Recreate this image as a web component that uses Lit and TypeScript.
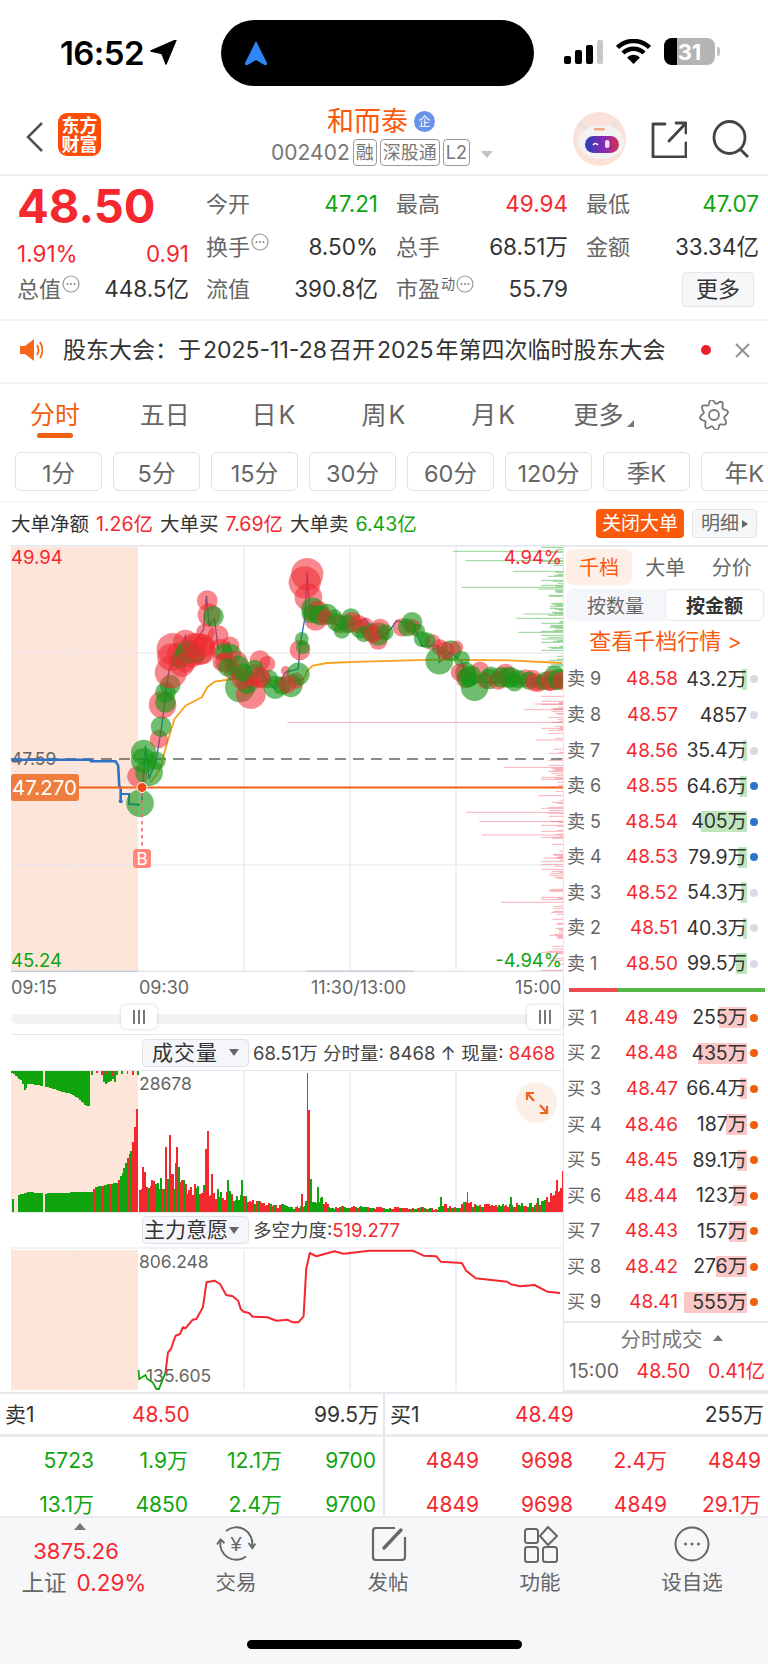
import { LitElement, html, css, svg, unsafeCSS } from "lit";
import { customElement } from "lit/decorators.js";

const RED = "#f5282f";
const GREEN = "#10a50e";
const R = unsafeCSS(RED);
const G = unsafeCSS(GREEN);
const zx = (x: number) => x / 2.75;
const zy = (y: number, o = 540) => o + y / 3;
let seed = 7;
const rnd = () => {
  seed = (seed * 16807) % 2147483647;
  return (seed - 1) / 2147483646;
};
const pts = (a: number[][], o = 540) => a.map(([x, y]) => `${zx(x).toFixed(1)},${zy(y, o).toFixed(1)}`).join(" ");
const interp = (t: number[][], x: number) => {
  for (let i = 1; i < t.length; i++) {
    if (x <= t[i][0]) {
      const [a, b] = t[i - 1];
      const [c, d] = t[i];
      return b + ((d - b) * (x - a)) / (c - a || 1);
    }
  }
  return t[t.length - 1][1];
};

// [zoomX, zoomY, radius, 1 = green]
const BUBBLES: number[][] = [
  [378,712,9,0],[385,793,12,1],[395,640,11,1],[395,665,11,1],[410,700,12,1],[430,665,8,1],[437,600,8,0],[443,563,9,1],
  [447,497,12,0],[455,490,9,1],[455,460,9,1],[468,438,9,1],[470,400,14,0],[470,355,12,0],[475,330,14,0],[510,310,11,0],
  [500,375,11,0],[495,360,8,1],[525,345,12,0],[545,330,14,0],[540,345,8,1],[560,320,10,0],[565,280,8,0],[570,185,9,0],
  [575,228,10,0],[587,232,9,1],[600,290,9,0],[605,330,9,0],[633,320,8,0],[615,340,8,1],[635,345,9,1],[610,370,8,0],
  [650,370,10,0],[655,385,10,1],[640,395,8,0],[660,445,13,1],[690,465,13,0],[680,430,10,1],[715,365,9,0],[700,410,10,0],
  [735,375,7,0],[720,420,8,0],[740,420,8,1],[757,445,10,1],[785,395,4,0],[800,440,10,1],[815,425,7,0],[820,405,10,1],
  [825,333,9,0],[833,325,6,1],[830,300,6,1],[845,105,14,0],[838,130,14,0],[848,175,12,0],[868,240,10,0],[860,210,10,1],
  [875,220,10,0],[900,225,9,1],[920,235,7,1],[935,255,8,0],[940,275,7,1],[965,235,8,1],[968,250,9,0],[990,270,8,1],
  [1005,260,7,0],[1020,280,8,1],[1040,305,8,0],[1040,285,10,1],[1045,270,9,0],[1105,265,8,0],[1133,250,9,1],[1135,265,7,0],
  [1160,300,7,1],[1190,310,7,0],[1210,325,7,0],[1208,365,12,1],[1240,335,9,1],[1255,325,6,0],[1270,360,7,1],[1280,400,9,1],
  [1280,420,8,0],[1305,445,12,1],[1320,395,8,0],[1290,420,7,1],[1350,410,8,1],[1335,425,7,0],[1395,415,9,1],[1390,405,9,0],
  [1415,430,8,1],[1445,418,8,0],[1465,420,8,0],[1490,430,7,1],[1480,435,7,0],[1525,410,9,1],[1525,430,6,0],[1530,430,7,1],[1510,435,6,0],
  // packed cluster stretches
  [880,228,9,1],[855,225,8,1],[895,235,7,0],[925,250,8,1],[955,255,8,1],[985,255,8,0],[1000,285,7,1],[1025,285,8,0],[1060,280,7,1],
  [1120,265,8,1],[1150,275,6,1],[1175,305,7,1],[1225,335,8,0],[1265,400,8,0],[1295,410,9,1],[1285,415,9,1],
  [1345,420,9,1],[1370,425,8,0],[1378,415,9,1],[1405,415,9,1],[1425,420,8,1],[1455,425,8,1],[1470,430,8,0],[1500,425,8,1],
  [1515,425,9,0],[1535,420,9,1],[1545,425,8,0],[490,345,10,0],[515,340,10,1],[510,370,9,0],[535,320,11,0],[555,335,12,0],
  [620,370,9,0],[625,385,8,1],[665,420,9,0],[670,400,8,1],[700,390,8,1],[715,415,9,0],[775,440,8,1],[790,435,8,0],
];
const PRICE = [[390,790],[400,620],[410,720],[430,660],[445,560],[455,470],[465,390],[480,370],[510,290],[520,340],[560,270],[568,170],[575,260],[590,240],[600,330],[630,310],[640,400],[690,450],[715,380],[730,420],[757,450],[785,400],[820,390],[825,320],[838,240],[845,100],[850,200],[900,230],[940,270],[1005,240],[1040,300],[1075,270],[1090,245],[1135,255],[1160,320],[1205,320],[1208,370],[1240,340],[1270,370],[1285,430],[1400,430],[1545,430]];
const AVG = [[415,730],[440,690],[460,610],[480,540],[510,500],[555,475],[570,445],[590,428],[640,420],[800,430],[835,420],[845,395],[860,380],[900,372],[1000,368],[1200,362],[1400,364],[1545,372]];
const WILL_RED = [[455,490],[462,430],[470,420],[483,380],[495,375],[503,355],[510,358],[530,332],[540,330],[558,295],[568,220],[590,215],[605,225],[622,258],[640,262],[655,275],[662,300],[670,308],[685,312],[695,323],[735,325],[760,335],[790,332],[805,340],[820,340],[835,322],[842,180],[852,132],[870,142],[920,127],[945,134],[1015,125],[1135,125],[1165,140],[1200,142],[1212,158],[1270,162],[1282,185],[1308,208],[1395,218],[1405,226],[1430,232],[1470,228],[1505,248],[1540,252]];
const WILL_GREEN = [[381,483],[383,510],[400,498],[405,510],[420,520],[430,540],[437,540],[450,505],[455,490]];

const DEPTH: { y: number; x: number; g: boolean }[] = [];
for (let y = 25; y < 1295; y += 3) {
  const g = y < 400;
  const p = rnd();
  if (p < (g ? 0.5 : 0.45)) DEPTH.push({ y, g, x: 1548 - (p < 0.06 ? 60 : 8 + rnd() * 35) });
}
([[1245,37],[1280,65],[1410,97],[1270,145],[1480,150],[1420,238],[1425,280],[1490,300],[1440,225]] as number[][]).forEach(([x, y]) => DEPTH.push({ x, y, g: true }));
([[790,550],[1440,512],[1475,603],[1385,685],[1282,820],[1318,848],[1325,888],[1495,957],[1378,1090],[1520,1230],[1470,495],[1480,770]] as number[][]).forEach(([x, y]) => DEPTH.push({ x, y, g: false }));

// volume bars, in zoom units (origin y = 1020, base = 578)
const VOL: { x: number; h: number; c: string; top?: boolean }[] = [];
const TOP_ENV = [[30,5],[58,30],[66,58],[76,38],[100,42],[120,46],[150,55],[170,64],[190,66],[210,80],[230,100],[245,108]];
for (let x = 31; x < 246; x += 4.9) if (Math.abs(x - 118) > 3) VOL.push({ x, h: interp(TOP_ENV, x), c: GREEN, top: true });
for (let x = 283; x < 315; x += 4.9) VOL.push({ x, h: 22 + rnd() * 16, c: GREEN, top: true });
for (let x = 250; x < 378; x += 14) VOL.push({ x, h: 6 + rnd() * 8, c: rnd() > 0.5 ? RED : GREEN, top: true });
const PRE_ENV = [[50,52],[80,60],[120,55],[170,58],[250,60],[260,75],[320,88],[335,120],[350,165],[360,185],[367,235],[373,310]];
for (let x = 50; x < 378; x += 4.9) if (Math.abs(x - 118) > 3) VOL.push({ x, h: interp(PRE_ENV, x), c: (x > 250 && Math.floor(x) % 23 < 5) || x > 360 ? RED : GREEN });
VOL.push({ x: 34, h: 38, c: GREEN });
const ENV = [[381,100],[400,90],[440,110],[480,130],[530,85],[600,75],[660,60],[700,35],[820,18],[840,40],[880,50],[910,20],[1200,14],[1215,25],[1260,18],[1285,45],[1300,25],[1400,25],[1480,30],[1510,60],[1545,80]];
for (let x = 382; x < 1546; x += 4.87) VOL.push({ x, h: interp(ENV, x) * (0.5 + 0.5 * rnd()), c: rnd() > 0.45 ? RED : GREEN });
([[390,135,RED],[396,120,RED],[455,195,RED],[465,230,RED],[485,195,RED],[480,148,RED],[460,100,GREEN],[490,135,GREEN],[503,95,GREEN],[570,242,RED],[565,190,RED],[580,115,RED],[625,95,GREEN],[662,95,GREEN],[843,418,RED],[848,306,RED],[828,55,RED],[853,98,GREEN],[872,75,GREEN],[1210,45,GREEN],[1283,60,GREEN],[1403,45,GREEN],[1478,42,GREEN],[1545,122,RED],[1530,95,RED]] as [number, number, string][]).forEach(([x, h, c]) => VOL.push({ x, h, c }));

const ASKS = [["9","48.58","43.2万",5,0],["8","48.57","4857",0,0],["7","48.56","35.4万",4,0],["6","48.55","64.6万",7,1],["5","48.54","405万",46,1],["4","48.53","79.9万",9,1],["3","48.52","54.3万",6,0],["2","48.51","40.3万",4,0],["1","48.50","99.5万",11,0]] as [string,string,string,number,number][];
const BIDS = [["1","48.49","255万",28],["2","48.48","435万",49],["3","48.47","66.4万",7],["4","48.46","187万",21],["5","48.45","89.1万",10],["6","48.44","123万",14],["7","48.43","157万",18],["8","48.42","276万",31],["9","48.41","555万",63]] as [string,string,string,number][];

const gearPath = (() => {
  const p: string[] = [];
  for (let i = 0; i <= 96; i++) {
    const a = (i / 96) * Math.PI * 2;
    const r = 12.3 + 1.9 * Math.cos(a * 8 + Math.PI / 2);
    p.push(`${(15 + r * Math.cos(a)).toFixed(2)} ${(15 + r * Math.sin(a) * 1.1).toFixed(2)}`);
  }
  return "M" + p.join("L") + "Z";
})();

const dots = html`<svg class="info" width="18" height="18" viewBox="0 0 18 18"><circle cx="9" cy="9" r="8" fill="none" stroke="#999" stroke-width="1.2"/><circle cx="5.5" cy="9" r="1" fill="#888"/><circle cx="9" cy="9" r="1" fill="#888"/><circle cx="12.5" cy="9" r="1" fill="#888"/></svg>`;
const T = "Inter, sans-serif";

@customElement("app-root")
export class AppRoot extends LitElement {
  static styles = css`
    :host { display: block; width: 768px; height: 1665px; overflow: hidden; background: #fff; position: relative; font-family: Inter, "Noto Sans CJK SC", sans-serif; color: #333; }
    svg { display: block; }
    .status { height: 100px; display: flex; align-items: flex-start; position: relative; }
    .time { font-size: 33px; font-weight: 600; color: #000; margin: 33px 0 0 60px; width: 90px; letter-spacing: -0.6px; line-height: 40px; }
    .loc { margin: 40px 0 0 0; }
    .island { position: absolute; left: 221px; top: 20px; width: 313px; height: 66px; border-radius: 33px; background: #000; display: flex; align-items: center; padding-left: 23px; box-sizing: border-box; }
    .sysicons { position: absolute; left: 564px; top: 38px; display: flex; align-items: center; gap: 13px; }
    .batt { width: 51px; height: 27px; border-radius: 8px; background: #b4b4b4; position: relative; display: flex; align-items: center; justify-content: center; overflow: hidden; color: #fff; font: 700 22px Inter, sans-serif; }
    .batt i { position: absolute; left: 0; top: 0; bottom: 0; width: 13px; background: #000; }
    .batt span { position: relative; }
    .tip { width: 3px; height: 9px; border-radius: 0 2px 2px 0; background: #c4c4c4; margin-left: -11px; }
    .head { border-bottom: 2px solid #eceef1; display: flex; align-items: center; position: relative; height: 74px; }
    .back { margin-left: 25px; }
    .logo { width: 43px; height: 43px; border-radius: 9px; background: #fa4d0a; color: #fff; margin-left: 13px; margin-top: -6px; display: flex; flex-direction: column; align-items: center; justify-content: center; font: 700 18px/20px "Noto Sans CJK SC", sans-serif; }
    .logo span { display: block; height: 19px; line-height: 19px; }
    .title { position: absolute; left: 200px; right: 200px; top: 5px; display: flex; flex-direction: column; align-items: center; }
    .name { color: #fa5a0c; font-size: 27px; line-height: 34px; display: flex; align-items: center; gap: 6px; transform: translateX(-3px); }
    .qy { width: 21px; height: 21px; border-radius: 50%; background: #6a92ea; color: #fff; font-size: 12px; line-height: 21px; display: flex; align-items: center; justify-content: center; margin-top: -2px; }
    .codes { display: flex; align-items: center; gap: 3px; color: #777; font-size: 21px; line-height: 27px; height: 27px; transform: translateX(-2px); }
    .codes b { font-weight: 400; font-size: 18px; line-height: 25px; height: 25px; border: 1px solid #9a9a9a; border-radius: 4px; padding: 0 2px; color: #777; }
    .codes em { width: 0; height: 0; border: 6px solid transparent; border-top: 7px solid #c4c4c4; border-bottom: 0; margin: 3px 0 0 8px; }
    .headr { margin-left: auto; display: flex; align-items: center; margin-right: 18px; margin-top: 4px; }
    .quote { height: 143px; border-bottom: 2px solid #f1f2f4; display: flex; }
    .qleft { width: 172px; margin-left: 17px; display: flex; flex-direction: column; }
    .price { color: ${R}; font-size: 47px; font-weight: 700; line-height: 60px; height: 58px; }
    .sub { display: flex; justify-content: space-between; color: ${R}; font-size: 22.5px; line-height: 26px; height: 39px; align-items: center; }
    .lastl { display: flex; justify-content: space-between; align-items: center; height: 31px; font-size: 22.5px; line-height: 26px; color: #333; white-space: nowrap; }
    .lab { color: #666; font-size: 22px; line-height: 26px; display: inline-flex; align-items: center; }
    .info { margin: -10px 0 0 1px; }
    .stats { margin: 7px 0 0 17px; display: grid; grid-template-columns: 172px 172px 173px; column-gap: 18px; grid-auto-rows: 42.5px; align-items: center; }
    .stat { display: flex; justify-content: space-between; align-items: center; font-size: 22.5px; line-height: 26px; color: #333; white-space: nowrap; }
    .r { color: ${R}; } .g { color: ${G}; }
    .more { width: 72px; height: 35px; box-sizing: border-box; border: 1px solid #e4e6ea; border-radius: 4px; background: #f6f7f9; color: #333; font-size: 22px; display: flex; align-items: center; justify-content: center; margin-left: auto; margin-right: 5px; }
    .notice { height: 58px; padding-bottom: 3px; display: flex; align-items: center; border-bottom: 2px solid #f3f4f6; font-size: 23px; line-height: 28px; }
    .notice .txt { margin-left: 20px; width: 622px; white-space: nowrap; color: #333; }
    .notice .txt span { margin: 0 2px; }
    .rdot { width: 10px; height: 10px; border-radius: 50%; background: #f0202a; margin-left: 16px; }
    .tabs { height: 68px; display: grid; grid-template-columns: repeat(7, 109.8px); align-items: center; color: #666; font-size: 25px; line-height: 30px; position: relative; }
    .tabs > div { text-align: center; margin-bottom: 6px; display: flex; justify-content: center; }
    .on { color: #f0600f; position: relative; }
    .on::after { content: ""; position: absolute; left: 50%; margin-left: -18px; bottom: -8px; width: 36px; height: 5px; border-radius: 3px; background: #f0600f; }
    .tri { width: 0; height: 0; border-left: 7px solid transparent; border-bottom: 7px solid #777; align-self: flex-end; margin: 0 0 3px 4px; }
    .periods { height: 50px; display: flex; gap: 11px; padding-left: 15px; border-bottom: 1px solid #f1f2f4; white-space: nowrap; box-sizing: border-box; }
    .periods div { flex: none; width: 87px; height: 39px; box-sizing: border-box; border: 1px solid #dfe1e5; border-radius: 6px; color: #666; font-size: 23.5px; display: flex; align-items: center; justify-content: center; }
    .big { height: 43px; box-sizing: border-box; display: flex; align-items: center; padding: 0 11px; font-size: 19.5px; line-height: 24px; color: #333; white-space: nowrap; }
    .big span { margin-right: 7px; }
    .close { margin-left: auto; width: 88px; height: 29px; border-radius: 4px; background: #fa5a0c; color: #fff; display: flex; align-items: center; justify-content: center; font-size: 19px; }
    .detail { margin-left: 8px; width: 65px; height: 29px; border-radius: 4px; border: 1px solid #e2e4e8; box-sizing: border-box; background: #f6f7f9; color: #666; display: flex; align-items: center; justify-content: center; gap: 3px; font-size: 19px; }
    .detail i { width: 0; height: 0; border: 4px solid transparent; border-left: 6px solid #666; border-right: 0; }
    .main { display: flex; height: 847px; }
    .left { width: 563px; flex: none; }
    .right { flex: 1; border-left: 1px solid #e4e7ee; border-top: 2px solid #e9ebf0; border-bottom: 2px solid #e4e7ee; box-sizing: border-box; padding: 2px 4px 0 2px; display: flex; flex-direction: column; }
    .leftchart { margin-left: 11px; }
    .times { height: 31px; margin-left: 11px; display: flex; align-items: center; color: #666; font-size: 18px; line-height: 22px; }
    .times span:nth-child(1) { width: 128px; }
    .times span:nth-child(2) { width: 172px; }
    .times span:nth-child(3) { width: 204px; }
    .slider { height: 32px; margin-left: 11px; border-bottom: 1px solid #e4e7ee; box-sizing: border-box; position: relative; display: flex; align-items: center; }
    .track { width: 100%; height: 10px; background: #f1f2f4; border-radius: 5px; }
    .handle { position: absolute; top: 2px; width: 36px; height: 24px; background: #fff; border-radius: 5px; box-shadow: 0 0 3px rgba(0,0,0,.2); display: flex; align-items: center; justify-content: center; gap: 3.5px; }
    .handle i { width: 1.5px; height: 14px; background: #777; }
    .tool { height: 35px; display: flex; align-items: center; margin-left: 142px; font-size: 18.5px; line-height: 24px; color: #444; white-space: nowrap; box-sizing: border-box; }
    .drop { width: 107px; height: 28px; flex: none; box-sizing: border-box; background: #f5f6f9; border: 1px solid #dfe2e8; border-radius: 4px; display: flex; align-items: center; font-size: 21px; line-height: 26px; color: #333; padding-left: 9px; margin-right: 4px; justify-content: space-between; padding-right: 9px; }
    .drop.tight { padding-left: 1px; }
    .drop i { width: 0; height: 0; border: 5px solid transparent; border-top: 7px solid #666; border-bottom: 0; }
    .chartbox { margin-left: 11px; position: relative; }
    .expand { position: absolute; left: 505px; top: 12px; width: 41px; height: 41px; border-radius: 50%; background: #fcefe8; display: flex; align-items: center; justify-content: center; }
    .seg1 { display: flex; height: 36px; font-size: 20px; color: #666; }
    .seg1 div { flex: 1; display: flex; align-items: center; justify-content: center; border-radius: 7px; }
    .seg1 .act { flex: none; width: 66px; background: #fdeee6; color: #fa5a0c; }
    .seg2 { display: flex; height: 32px; margin-top: 4px; background: #f5f6f9; border-radius: 7px; font-size: 19px; color: #666; }
    .seg2 div { width: 99px; display: flex; align-items: center; justify-content: center; }
    .seg2 .act { background: #fff; border: 1px solid #e8eaee; border-radius: 7px; box-sizing: border-box; color: #333; font-weight: 700; }
    .golink { height: 36px; margin-bottom: 5px; display: flex; align-items: center; justify-content: center; color: #fa5a0c; font-size: 22px; white-space: nowrap; }
    .row { height: 35.67px; display: flex; align-items: center; white-space: nowrap; font-size: 19px; line-height: 24px; }
    .row .l { width: 32px; padding-left: 1px; box-sizing: border-box; color: #666; font-size: 18px; flex: none; }
    .row .p { width: 80px; text-align: right; color: ${R}; flex: none; }
    .row .a { width: 69px; text-align: right; position: relative; flex: none; height: 21px; line-height: 21px; color: #333; font-size: 19.5px; letter-spacing: -0.1px; }
    .row .a i { position: absolute; right: 0; top: 0; bottom: 0; }
    .row .a span { position: relative; }
    .dot { width: 8px; height: 8px; border-radius: 50%; margin-left: 3px; flex: none; }
    .power { height: 4px; margin: 6.5px 0 8px 3px; background: linear-gradient(to right, #ee4b4f 0 25%, #53b846 25% 100%); width: 196px; }
    .deal { height: 29px; border-top: 2px solid #e4e7ee; display: flex; align-items: center; justify-content: center; color: #777; font-size: 20.5px; margin: 1px -4px 0 -2px; gap: 10px; padding-left: 10px; }
    .deal i { width: 0; height: 0; border: 5px solid transparent; border-bottom: 6px solid #777; border-top: 0; }
    .trade { display: flex; height: 38px; align-items: center; font-size: 19.5px; line-height: 24px; white-space: nowrap; justify-content: space-between; padding-left: 3px; }
    .table { height: 124px; overflow: hidden; position: relative; border-top: 2px solid #e4e7ee; box-sizing: border-box; }
    .tgrid { display: grid; grid-template-columns: 383px 385px; }
    .cellrow { height: 39px; padding-top: 1px; border-bottom: 3px solid #e9ebef; display: flex; align-items: center; font-size: 21px; line-height: 26px; position: relative; white-space: nowrap; }
    .cellrow .n { width: 127px; padding-left: 5px; color: #333; }
    .cellrow .v { width: 60px; color: ${R}; }
    .cellrow .q { margin-left: auto; margin-right: 4px; }
    .col2 { border-left: 2px solid #e4e7ee; }
    .col2 .n { width: 125px; }
    .trs { display: grid; grid-template-columns: repeat(4, 94px); grid-auto-rows: 44px; align-items: center; text-align: right; font-size: 21px; line-height: 26px; height: 90px; padding-top: 2px; }
    .trs.gg { color: ${G}; padding-right: 7px; }
    .trs.rr { color: ${R}; }
    .nav { height: 148px; background: #f6f7f9; border-top: 2px solid #e9ebef; box-sizing: border-box; display: grid; grid-template-columns: repeat(5, 152px); padding-left: 8px; position: relative; }
    .cell { display: flex; flex-direction: column; align-items: center; color: #666; font-size: 20.5px; padding-top: 6px; }
    .cell svg { height: 40px; }
    .cell span { margin-top: 6px; line-height: 26px; }
    .idx { display: flex; flex-direction: column; align-items: center; font-size: 20px; color: ${R}; margin-left: -8px; }
    .idx em { width: 0; height: 0; border: 6px solid transparent; border-bottom: 7px solid #777; border-top: 0; margin: 5px 0 8px; }
    .idx b { font-weight: 400; line-height: 26px; font-size: 22px; margin-left: -8px; }
    .idx div { line-height: 26px; margin-top: 6px; white-space: nowrap; font-size: 22.5px; margin-left: 8px; }
    .idx u { text-decoration: none; color: #666; margin-right: 10px; }
    .home { position: absolute; left: 247px; top: 122px; width: 275px; height: 9px; border-radius: 5px; background: #000; }
  `;

  mainChart() {
    return html`<svg class="leftchart" width="552" height="427" viewBox="11 546 552 427">
      <rect x="11" y="548" width="127" height="423" fill="#fde5da"/>
      <g stroke="#e3e6ee" stroke-width="1.2">
        <line x1="11" y1="546.5" x2="563" y2="546.5" stroke-width="2"/>
        <line x1="75" y1="548" x2="75" y2="971"/><line x1="244" y1="548" x2="244" y2="971"/><line x1="350" y1="548" x2="350" y2="971"/><line x1="456" y1="548" x2="456" y2="971"/>
        <line x1="11" y1="654" x2="563" y2="654"/><line x1="11" y1="866" x2="563" y2="866"/>
        <line x1="11" y1="972.5" x2="563" y2="972.5" stroke-width="2"/>
      </g>
      <line x1="11" y1="972.5" x2="138" y2="972.5" stroke="#c9cdd8" stroke-width="2"/>
      <line x1="307" y1="972.5" x2="414" y2="972.5" stroke="#c9cdd8" stroke-width="2"/>
      ${DEPTH.map((d) => svg`<line x1=${zx(d.x)} x2="563" y1=${zy(d.y)} y2=${zy(d.y)} stroke=${d.g ? "rgba(60,175,60,.55)" : "rgba(240,70,85,.42)"} stroke-width="1"/>`)}
      <text x="11" y="766" font-family=${T} font-size="17.5" fill="#666">47.59</text>
      <line x1="11" y1="760" x2="563" y2="760" stroke="#666" stroke-width="1.6" stroke-dasharray="11 7"/>
      <polyline points=${pts([[30,662],[250,662],[250,667],[318,667],[325,680],[328,745],[332,745],[332,787]])} fill="none" stroke="#2e72c6" stroke-width="2.6" stroke-linejoin="round"/>
      <polyline points=${pts([[332,765],[355,765],[355,795],[385,797]])} fill="none" stroke="#2e72c6" stroke-width="2"/>
      <circle cx=${zx(332)} cy=${zy(787)} r="2" fill="#2e72c6"/>
      <polyline points=${pts(PRICE)} fill="none" stroke="#2e72c6" stroke-width="1.4"/>
      <polyline points=${pts(AVG)} fill="none" stroke="#f7a01e" stroke-width="1.8" stroke-linejoin="round"/>
      ${BUBBLES.map(([x, y, r, g]) => svg`<circle cx=${zx(x)} cy=${zy(y)} r=${r * 1.15} fill=${g ? "rgba(22,150,22,.62)" : "rgba(240,40,50,.55)"}/>`)}
      <line x1="11" y1="788.5" x2="563" y2="788.5" stroke="#f2621a" stroke-width="1.8"/>
      <line x1="142" y1="794" x2="142" y2="850" stroke="#f5666a" stroke-width="1.6" stroke-dasharray="3.5 3.5"/>
      <circle cx="142" cy="788.5" r="5" fill="#f2451c" stroke="#fff" stroke-width="1"/>
      <rect x="133" y="850" width="18" height="19" rx="3.5" fill="#ff8678"/>
      <text x="142" y="865.5" text-anchor="middle" font-family=${T} font-size="17" fill="#fff">B</text>
      <rect x="11" y="775" width="68" height="27" rx="3" fill="#ee7d3e"/>
      <text x="12" y="796" font-family=${T} font-size="20.5" fill="#fff">47.270</text>
      <text x="11" y="565" font-family=${T} font-size="18.5" fill=${RED}>49.94</text>
      <text x="11" y="968" font-family=${T} font-size="18.5" fill=${GREEN}>45.24</text>
      <text x="562" y="565" text-anchor="end" font-family=${T} font-size="18.5" fill=${RED}>4.94%</text>
      <text x="562" y="968" text-anchor="end" font-family=${T} font-size="18.5" fill=${GREEN}>-4.94%</text>
    </svg>`;
  }

  volChart() {
    return html`<div class="chartbox"><svg width="552" height="143" viewBox="11 1071 552 143">
      <rect x="11" y="1072" width="127" height="141" fill="#fde5da"/>
      <g stroke="#e3e6ee" stroke-width="1.2">
        <line x1="11" y1="1071.5" x2="563" y2="1071.5"/>
        <line x1="75" y1="1072" x2="75" y2="1213"/><line x1="244" y1="1072" x2="244" y2="1213"/><line x1="350" y1="1072" x2="350" y2="1213"/><line x1="456" y1="1072" x2="456" y2="1213"/>
        <line x1="11" y1="1213.5" x2="563" y2="1213.5"/>
      </g>
      ${VOL.map((b) => svg`<rect x=${zx(b.x)} width="1.9" y=${b.top ? 1072 : 1213 - b.h / 3} height=${b.h / 3} fill=${b.c} shape-rendering="crispEdges"/>`)}
      <text x="139" y="1091" font-family=${T} font-size="17.5" fill="#666">28678</text>
    </svg><div class="expand"><svg width="24" height="24" viewBox="0 0 24 24" fill="none" stroke="#f0651e" stroke-width="2.2"><path d="M2 9V2h7M2 2l7 8M22 15v7h-7M22 22l-7-8"/></svg></div></div>`;
  }

  willChart() {
    return html`<svg class="leftchart" width="552" height="144" viewBox="11 1248 552 144">
      <rect x="11" y="1251" width="127" height="140" fill="#fde5da"/>
      <g stroke="#e3e6ee" stroke-width="1.2">
        <line x1="11" y1="1249" x2="563" y2="1249"/>
        <line x1="75" y1="1251" x2="75" y2="1391"/><line x1="244" y1="1251" x2="244" y2="1391"/><line x1="350" y1="1251" x2="350" y2="1391"/><line x1="456" y1="1251" x2="456" y2="1391"/>
      </g>
      <text x="139" y="1269" font-family=${T} font-size="17.5" fill="#666">806.248</text>
      <text x="146" y="1383" font-family=${T} font-size="17.5" fill="#666">135.605</text>
      <polyline points=${pts(WILL_GREEN, 1210)} fill="none" stroke=${GREEN} stroke-width="1.8"/>
      <polyline points=${pts(WILL_RED, 1210)} fill="none" stroke=${RED} stroke-width="2" stroke-linejoin="round"/>
    </svg>`;
  }

  render() {
    return html`
      <div class="status">
        <div class="time">16:52</div>
        <svg class="loc" width="27" height="26" viewBox="0 0 27 26"><path d="M26 1 1 12l11 2.500L16 25Z" fill="#000" stroke="#000" stroke-width="1.500" stroke-linejoin="round" transform="translate(0 -1)"/></svg>
        <div class="island"><svg width="24" height="25" viewBox="0 0 24 25"><path d="M12 0 23 22q.5 3-2.500 2L12 19l-8.500 5q-3 1-2.500-2Z" fill="#2f86f5"/></svg></div>
        <div class="sysicons">
          <svg width="39" height="25" viewBox="0 0 39 25"><rect x="0" y="17" width="7" height="8" rx="2" fill="#000"/><rect x="11" y="11" width="7" height="14" rx="2" fill="#000"/><rect x="22" y="6" width="7" height="19" rx="2" fill="#000"/><rect x="33" y="1" width="6" height="24" rx="2" fill="#c8c8c8"/></svg>
          <svg width="35" height="26" viewBox="0 0 35 26"><path d="M1.500 8.500a23 23 0 0 1 32 0M7 14a15 15 0 0 1 21 0" fill="none" stroke="#000" stroke-width="4.500"/><path d="M17.500 25 11 18.500a9 9 0 0 1 13 0Z" fill="#000"/></svg>
          <div class="batt"><i></i><span>31</span></div><div class="tip"></div>
        </div>
      </div>
      <div class="head">
        <div class="title">
          <div class="name">和而泰<span class="qy">企</span></div>
          <div class="codes">002402<b>融</b><b>深股通</b><b>L2</b><em></em></div>
        </div>
        <svg class="back" width="20" height="32" viewBox="0 0 20 32"><path d="M17 2 3 16l14 14" fill="none" stroke="#555" stroke-width="2.600"/></svg>
        <div class="logo"><span>东方</span><span>财富</span></div>
        <div class="headr">
          <svg width="54" height="54" viewBox="0 0 54 54">
            <defs><linearGradient id="v" x1="0" x2="1"><stop offset="0" stop-color="#2b3fb8"/><stop offset=".6" stop-color="#8a2ab0"/><stop offset="1" stop-color="#d8304a"/></linearGradient></defs>
            <ellipse cx="26.500" cy="27" rx="26.500" ry="27" fill="#fbe2d8"/>
            <path d="M8 11 13 20M42 11 38 20" stroke="#e3e1e1" stroke-width="3.500" stroke-linecap="round"/>
            <ellipse cx="28" cy="30" rx="23" ry="17" fill="#f3f2f3"/>
            <rect x="21" y="16" width="11" height="2.500" rx="1.200" fill="#f3a77e"/>
            <rect x="12" y="24" width="34" height="17" rx="8.500" fill="url(#v)"/>
            <path d="M20 33q2.500-3 5 0" stroke="#fff" stroke-width="1.500" fill="none"/>
            <rect x="32" y="28" width="4.500" height="8" rx="2.200" fill="#f7d8ef"/>
          </svg>
          <svg style="margin-left:24px" width="36" height="37" viewBox="0 0 36 37" fill="none" stroke="#444" stroke-width="2.800"><path d="M14 3H2v33h33V22M35 12V2H25M35 2 18 20" stroke-linecap="round" stroke-linejoin="round"/></svg>
          <svg style="margin-left:25px" width="38" height="38" viewBox="0 0 38 38" fill="none" stroke="#444" stroke-width="2.800"><ellipse cx="17.500" cy="17.500" rx="15.500" ry="16"/><path d="m28 29 8 8"/></svg>
        </div>
      </div>
      <div class="quote">
        <div class="qleft">
          <div class="price">48.50</div>
          <div class="sub"><span>1.91%</span><span>0.91</span></div>
          <div class="lastl"><span class="lab">总值${dots}</span><span>448.5亿</span></div>
        </div>
        <div class="stats">
          <div class="stat"><span class="lab">今开</span><span class="g">47.21</span></div>
          <div class="stat"><span class="lab">最高</span><span class="r">49.94</span></div>
          <div class="stat"><span class="lab">最低</span><span class="g">47.07</span></div>
          <div class="stat"><span class="lab">换手${dots}</span><span>8.50%</span></div>
          <div class="stat"><span class="lab">总手</span><span>68.51万</span></div>
          <div class="stat"><span class="lab">金额</span><span>33.34亿</span></div>
          <div class="stat"><span class="lab">流值</span><span>390.8亿</span></div>
          <div class="stat"><span class="lab">市盈<sup style="font-size:14px;margin:-10px 0 0 1px;line-height:14px">动</sup>${dots}</span><span>55.79</span></div>
          <div class="stat"><div class="more">更多</div></div>
        </div>
      </div>
      <div class="notice">
        <svg style="margin-left:20px" width="23" height="24" viewBox="0 0 23 24" fill="#f8661a"><path d="M0 8h5l9-7v22l-9-7H0Z"/><path d="M17 7q3 5 0 10M20 4q5 8 0 16" fill="none" stroke="#f8661a" stroke-width="1.800"/></svg>
        <div class="txt">股东大会：于<span>2025-11-28</span>召开<span>2025</span>年第四次临时股东大会</div>
        <div class="rdot"></div>
        <svg style="margin-left:24px" width="15" height="15" viewBox="0 0 15 15" stroke="#8f8f8f" stroke-width="1.800"><path d="M1 1l13 13M14 1 1 14"/></svg>
      </div>
      <div class="tabs">
        <div><span class="on">分时</span></div><div>五日</div><div style="letter-spacing:2px">日K</div><div style="letter-spacing:2px">周K</div><div style="letter-spacing:2px">月K</div>
        <div>更多<i class="tri"></i></div>
        <div><svg width="30" height="30" viewBox="0 0 30 30" fill="none" stroke="#777" stroke-width="1.800"><path d=${gearPath}/><circle cx="15" cy="15" r="5"/></svg></div>
      </div>
      <div class="periods">${["1分","5分","15分","30分","60分","120分","季K","年K"].map((p) => html`<div>${p}</div>`)}</div>
      <div class="big"><span>大单净额</span><span class="r">1.26亿</span><span>大单买</span><span class="r">7.69亿</span><span>大单卖</span><span class="g">6.43亿</span>
        <div class="close">关闭大单</div><div class="detail">明细<i></i></div></div>
      <div class="main">
        <div class="left">
          ${this.mainChart()}
          <div class="times"><span>09:15</span><span>09:30</span><span>11:30/13:00</span><span>15:00</span></div>
          <div class="slider"><div class="track"></div>
            <div class="handle" style="left:110px"><i></i><i></i><i></i></div>
            <div class="handle" style="left:516px"><i></i><i></i><i></i></div></div>
          <div class="tool"><div class="drop"><span style="letter-spacing:1px">成交量</span><i></i></div><span>68.51万 分时量: 8468 ↑ 现量: <span class="r">8468</span></span></div>
          ${this.volChart()}
          <div class="tool" style="height:34px"><div class="drop tight"><span>主力意愿</span><i></i></div><span>多空力度:<span class="r">519.277</span></span></div>
          ${this.willChart()}
        </div>
        <div class="right">
          <div class="seg1"><div class="act">千档</div><div>大单</div><div>分价</div></div>
          <div class="seg2"><div>按数量</div><div class="act">按金额</div></div>
          <div class="golink">查看千档行情 &gt;</div>
          ${ASKS.map(([n, p, a, w, b]) => html`<div class="row"><span class="l">卖 ${n}</span><span class="p">${p}</span><span class="a"><i style="width:${w}px;background:#bfe6bd"></i><span>${a}</span></span><span class="dot" style="background:${b ? "#2f74c8" : "#d8dbe2"}"></span></div>`)}
          <div class="power"></div>
          ${BIDS.map(([n, p, a, w]) => html`<div class="row"><span class="l">买 ${n}</span><span class="p">${p}</span><span class="a"><i style="width:${w}px;background:#fbc8c8"></i><span>${a}</span></span><span class="dot" style="background:#f0600c"></span></div>`)}
          <div class="deal">分时成交<i></i></div>
          <div class="trade"><span style="color:#666">15:00</span><span class="r">48.50</span><span class="r">0.41亿</span></div>
        </div>
      </div>
      <div class="table">
        <div class="tgrid">
          <div class="cellrow"><span class="n">卖1</span><span class="v">48.50</span><span class="q">99.5万</span></div>
          <div class="cellrow col2"><span class="n">买1</span><span class="v">48.49</span><span class="q">255万</span></div>
          <div class="trs gg">${["5723","1.9万","12.1万","9700","13.1万","4850","2.4万","9700"].map((t) => html`<span>${t}</span>`)}</div>
          <div class="trs rr col2">${["4849","9698","2.4万","4849","4849","9698","4849","29.1万"].map((t) => html`<span>${t}</span>`)}</div>
        </div>
      </div>
      <div class="nav">
        <div class="idx"><em></em><b>3875.26</b><div><u>上证</u>0.29%</div></div>
        <div class="cell"><svg width="40" height="40" viewBox="0 0 40 40" fill="none" stroke="#666" stroke-width="1.900"><path d="M10 7A16 16 0 0 1 36 22M32.500 19l3.800 5 3-4.500"/><path d="M30 32.500A16 16 0 0 1 4.500 17M1 20.500 4.500 15.500 8.500 19"/><text x="20" y="27" text-anchor="middle" font-family="Liberation Sans" font-size="20" fill="#666" stroke="none">¥</text></svg><span>交易</span></div>
        <div class="cell"><svg width="40" height="40" viewBox="0 0 40 40" fill="none" stroke="#666" stroke-width="2.200"><path d="M27 4H8q-3 0-3 3v26q0 3 3 3h26q3 0 3-3V13"/><path d="M16 24 33 6" stroke-width="3.400" stroke-linecap="round"/></svg><span>发帖</span></div>
        <div class="cell"><svg width="40" height="40" viewBox="0 0 40 40" fill="none" stroke="#666" stroke-width="2"><rect x="5" y="5" width="13" height="14" rx="2.500"/><path d="M28 3 37 12 28 21 20 12Z" stroke-linejoin="round"/><rect x="5" y="23" width="13" height="15" rx="2.500"/><rect x="23" y="23" width="14" height="15" rx="2.500"/></svg><span>功能</span></div>
        <div class="cell"><svg width="40" height="40" viewBox="0 0 40 40" fill="none" stroke="#666" stroke-width="2"><circle cx="20" cy="20" r="16.500"/><circle cx="13.500" cy="20" r="1.500" fill="#666" stroke="none"/><circle cx="20" cy="20" r="1.500" fill="#666" stroke="none"/><circle cx="26.500" cy="20" r="1.500" fill="#666" stroke="none"/></svg><span>设自选</span></div>
        <div class="home"></div>
      </div>
    `;
  }
}
